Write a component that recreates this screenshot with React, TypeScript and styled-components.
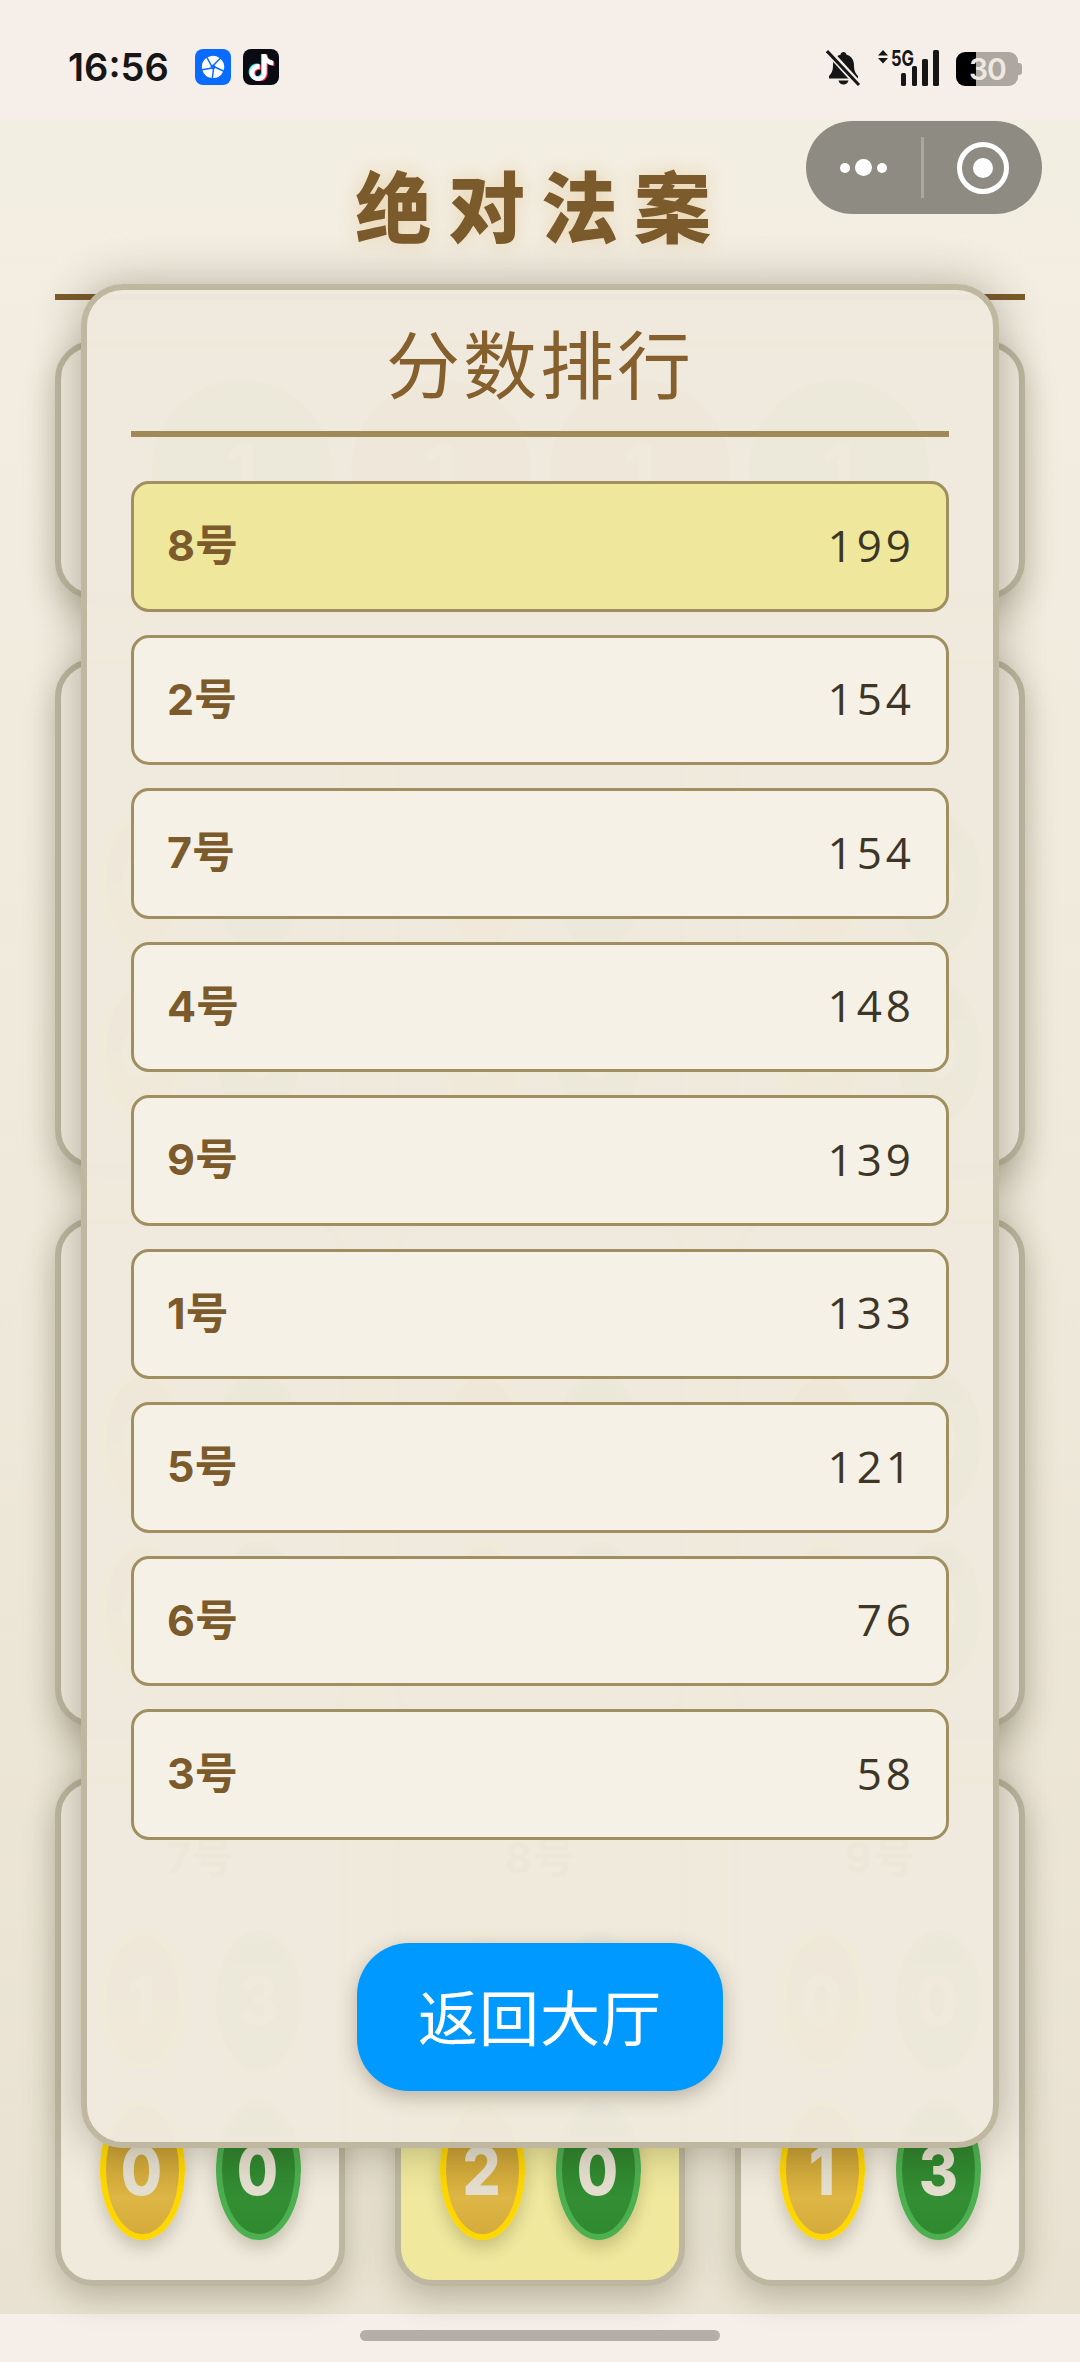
import { createGlobalStyle, styled } from "styled-components";

const CJK = `"Noto Sans CJK SC", sans-serif`;

const GlobalStyle = createGlobalStyle`
  html, body {
    margin: 0;
    padding: 0;
    background: #f6efe9;
  }
  * {
    box-sizing: border-box;
  }
`;

const Screen = styled.div`
  position: relative;
  width: 1080px;
  height: 2362px;
  display: flex;
  flex-direction: column;
  overflow: hidden;
  font-family: Inter, ${CJK};
  background: #f6efe9;
`;

/* status bar */
const StatusBar = styled.div`
  height: 120px;
  flex: none;
  display: flex;
  align-items: flex-start;
  justify-content: space-between;
  padding: 49px 58px 0 68px;
`;

const StatusGroup = styled.div`
  display: flex;
  align-items: center;
`;

const Clock = styled.span`
  font: 600 38px/36px Inter, sans-serif;
  color: #161616;
  width: 127px;
`;

const AppIcon = styled.div<{ $bg: string }>`
  width: 36px;
  height: 36px;
  border-radius: 8px;
  margin-right: 12px;
  background: ${(p) => p.$bg};
  display: flex;
  align-items: center;
  justify-content: center;
`;

const Battery = styled.div`
  position: relative;
  width: 66px;
  height: 34px;
  margin-left: 17px;
  margin-top: 2px;
  display: flex;
  align-items: center;
`;

const BatteryBody = styled.div`
  width: 62px;
  height: 34px;
  border-radius: 9px;
  background: linear-gradient(90deg, #000 32%, #aca7a0 32%);
`;

const BatteryNub = styled.div`
  width: 4px;
  height: 12px;
  border-radius: 0 3px 3px 0;
  background: #aca7a0;
`;

const BatteryLevel = styled.span`
  position: absolute;
  left: 13px;
  top: 0;
  width: 36px;
  text-align: center;
  font: 600 30px/34px Inter, sans-serif;
  letter-spacing: -1px;
  color: #efe8e0;
`;

/* mini program capsule */
const Capsule = styled.div`
  position: absolute;
  top: 121px;
  left: 806px;
  width: 236px;
  height: 93px;
  border-radius: 47px;
  background: #8e8b82;
  display: flex;
  align-items: center;
  z-index: 2;
`;

const CapsuleSide = styled.div<{ $width: number }>`
  flex: 0 0 ${(p) => p.$width}px;
  display: flex;
  align-items: center;
  justify-content: center;
  gap: 5px;
`;

const CapsuleDivider = styled.div`
  width: 3px;
  height: 61px;
  background: #aaa79e;
`;

const Dot = styled.div<{ $size: number }>`
  width: ${(p) => p.$size}px;
  height: ${(p) => p.$size}px;
  border-radius: 50%;
  background: #fff;
`;

const TargetRing = styled.div`
  width: 52px;
  height: 52px;
  border-radius: 50%;
  border: 5px solid #fff;
  display: flex;
  align-items: center;
  justify-content: center;
`;

const TargetCore = styled.div`
  width: 20px;
  height: 20px;
  border-radius: 50%;
  background: #fff;
`;

/* page behind the modal */
const Page = styled.main`
  flex: 1;
  padding: 0 55px;
  background: linear-gradient(180deg, #f3eee2 0%, #efe9db 50%, #e9e2d2 100%);
`;

const PageTitle = styled.h1`
  margin: 0;
  height: 180px;
  padding-top: 36px;
  padding-left: 2px;
  text-align: center;
  font: 900 77px/96px ${CJK};
  letter-spacing: 16px;
  color: #7b5a2b;
  text-shadow: 0 0 18px rgba(214, 170, 90, 0.35);
  border-bottom: 6px solid #7b5a2b;
`;

const Board = styled.div`
  display: flex;
  flex-direction: column;
  gap: 50px;
  margin-top: 41px;
`;

const Panel = styled.section<{ $on?: boolean }>`
  border: 6px solid #bdb6a0;
  border-radius: 38px;
  background: ${(p) => (p.$on ? "#efe89d" : "#f0eadd")};
  box-shadow: 0 12px 32px rgba(70, 60, 30, 0.28);
`;

const TopPanel = styled(Panel)`
  height: 258px;
  margin-bottom: 10px;
  display: flex;
  align-items: center;
  justify-content: center;
  gap: 19px;
`;

const Round = styled.div<{ $tone: string }>`
  width: 180px;
  height: 180px;
  border-radius: 50%;
  background: ${(p) => p.$tone};
  display: flex;
  align-items: center;
  justify-content: center;
  font: 800 70px/1 Inter, sans-serif;
  color: #e5dfd0;
`;

const SeatRow = styled.div`
  display: grid;
  grid-template-columns: repeat(3, 290px);
  justify-content: space-between;
`;

const SeatCard = styled(Panel)`
  height: 509px;
  display: flex;
  flex-direction: column;
  align-items: center;
`;

const SeatName = styled.div`
  height: 125px;
  width: 200px;
  padding-top: 44px;
  text-align: center;
  font: 700 43px/60px Inter, ${CJK};
  color: #7b5a2b;
  border-bottom: 2px solid #d9d0b8;
`;

const Chips = styled.div`
  display: grid;
  grid-template-columns: 85px 85px;
  gap: 30px 31px;
  margin-top: 22px;
`;

const Chip = styled.div<{ $kind: "gold" | "green" }>`
  width: 85px;
  height: 140px;
  border-radius: 50%;
  border: 6px solid ${(p) => (p.$kind === "gold" ? "#ffd700" : "#4caf50")};
  background: ${(p) =>
    p.$kind === "gold"
      ? "linear-gradient(180deg, #b98f25 0%, #deb645 72%, #d4ab3c 100%)"
      : "linear-gradient(180deg, #267a26 0%, #348f34 72%, #2f8a2f 100%)"};
  box-shadow: 0 8px 16px rgba(60, 50, 20, 0.22);
  display: flex;
  align-items: center;
  justify-content: center;
  font: 800 68px/1 Inter, sans-serif;
  color: #e5dfd0;
`;

const ChipDigit = styled.span`
  display: inline-block;
  transform: scaleX(0.88);
`;

/* ranking modal */
const Modal = styled.div`
  position: absolute;
  top: 284px;
  left: 81px;
  width: 918px;
  height: 1864px;
  padding: 0 44px;
  border: 6px solid #bfb7a0;
  border-radius: 42px;
  background: rgba(240, 234, 221, 0.98);
  box-shadow: 0 0 46px rgba(50, 42, 20, 0.32);
  display: flex;
  flex-direction: column;
  align-items: center;
  z-index: 1;
`;

const ModalTitle = styled.h2`
  margin: 0;
  width: 100%;
  height: 147px;
  padding-top: 10px;
  text-align: center;
  font: 400 74px/121px ${CJK};
  letter-spacing: 3px;
  color: #85602c;
  border-bottom: 6px solid #a08a58;
`;

const RankList = styled.ul`
  list-style: none;
  margin: 44px 0 0;
  padding: 0;
  width: 100%;
  display: flex;
  flex-direction: column;
  gap: 23px;
`;

const RankRow = styled.li<{ $top?: boolean }>`
  height: 130.5px;
  padding: 0 34px 0 33px;
  border: 3px solid #a08f60;
  border-radius: 18px;
  background: ${(p) => (p.$top ? "#efe89c" : "#f5f1e6")};
  display: flex;
  align-items: center;
  justify-content: space-between;
`;

const RankName = styled.span`
  font: 700 43px/60px Inter, ${CJK};
  color: #7b5a2b;
  margin-bottom: 2px;
`;

const RankScore = styled.span`
  font: 400 44px/60px "Open Sans", sans-serif;
  letter-spacing: 4px;
  margin: 0 -3px 3px 0;
  color: #3d3626;
`;

const BackButton = styled.button`
  width: 366px;
  height: 148px;
  margin-top: 103px;
  padding: 0 0 4px;
  border: none;
  border-radius: 52px;
  background: #0099ff;
  box-shadow: 0 6px 20px rgba(60, 50, 30, 0.3);
  font: 400 60px/1 ${CJK};
  letter-spacing: 1px;
  color: #fff;
`;

/* home indicator */
const HomeBar = styled.div`
  height: 48px;
  flex: none;
  display: flex;
  justify-content: center;
  padding-top: 16px;
`;

const HomeHandle = styled.div`
  width: 360px;
  height: 11px;
  border-radius: 6px;
  background: #b5aea6;
`;

const SignalIcon = styled.svg`
  margin-left: 16px;
  overflow: visible;
`;

const TIKTOK =
  "M12.525.02c1.31-.02 2.61-.01 3.91-.02.08 1.53.63 3.09 1.75 4.17 1.12 1.11 2.7 1.62 4.24 1.79v4.03c-1.44-.05-2.89-.35-4.2-.97-.57-.26-1.1-.59-1.62-.93-.01 2.92.01 5.84-.02 8.75-.08 1.4-.54 2.79-1.35 3.94-1.31 1.92-3.58 3.17-5.91 3.21-1.43.08-2.86-.31-4.08-1.03-2.02-1.19-3.44-3.37-3.65-5.71-.02-.5-.03-1-.01-1.49.18-1.9 1.12-3.72 2.58-4.96 1.66-1.44 3.98-2.13 6.15-1.72.02 1.48-.04 2.96-.04 4.44-.99-.32-2.15-.23-3.02.37-.63.41-1.11 1.04-1.36 1.75-.21.51-.15 1.07-.14 1.61.24 1.64 1.82 3.02 3.5 2.87 1.12-.01 2.19-.66 2.77-1.61.19-.33.4-.67.41-1.06.1-1.79.06-3.57.07-5.36.01-4.03-.01-8.05.02-12.07z";

const TiktokGlyph = () => (
  <svg width="27" height="27" viewBox="0 0 24 24">
    <path d={TIKTOK} fill="#25f4ee" transform="translate(-1 -0.6)" />
    <path d={TIKTOK} fill="#fe2c55" transform="translate(1 0.7)" />
    <path d={TIKTOK} fill="#fff" />
  </svg>
);

const PinwheelGlyph = () => (
  <svg width="24" height="24" viewBox="-13 -13 26 26">
    {[0, 72, 144, 216, 288].map((deg) => (
      <path
        key={deg}
        d="M-1.200 -2.200 L-5.800 -10.500 A12 12 0 0 1 7 -9.800 L.5 -2.900 Z"
        fill="#fff"
        transform={`rotate(${deg})`}
      />
    ))}
  </svg>
);

const BellOff = () => (
  <svg width="35" height="36" viewBox="0 0 35 36">
    <path
      d="M17.5 2c1.6 0 2.7 1 2.8 2.5C25.5 6 28 10 28 15c0 6 1.500 8.500 4 11v2.500H3V26c2.500-2.500 4-5 4-11 0-5 2.500-9 7.700-10.500C14.800 3 15.900 2 17.500 2z"
      fill="#161616"
    />
    <path d="M12.500 30.500h10c-.6 2.600-2.500 4-5 4s-4.400-1.400-5-4z" fill="#161616" />
    <path d="M2 1L33 35" stroke="#f6efe9" strokeWidth="7" />
    <path d="M1 1L33 35" stroke="#161616" strokeWidth="3" />
  </svg>
);

const Signal = () => (
  <SignalIcon width="62" height="38" viewBox="0 0 62 38">
    <path d="M1 6.500L6 1l5 5.500zM1 9l5 5.500L11 9z" fill="#161616" />
    <text
      x="14"
      y="17"
      fontFamily="Inter, sans-serif"
      fontWeight="700"
      fontSize="22"
      textLength="23"
      lengthAdjust="spacingAndGlyphs"
      fill="#161616"
    >
      5G
    </text>
    <rect x="24" y="24" width="5" height="13" rx="1.500" fill="#161616" />
    <rect x="35" y="17" width="5" height="20" rx="1.500" fill="#161616" />
    <rect x="45" y="10" width="6" height="27" rx="1.500" fill="#161616" />
    <rect x="56" y="1" width="6" height="36" rx="1.500" fill="#161616" />
  </SignalIcon>
);

const seatRows = [
  [
    { name: "1号", chips: ["0", "0", "0", "0"] },
    { name: "2号", chips: ["0", "0", "0", "0"] },
    { name: "3号", chips: ["0", "0", "0", "0"] },
  ],
  [
    { name: "4号", chips: ["0", "0", "0", "0"] },
    { name: "5号", chips: ["0", "0", "0", "0"] },
    { name: "6号", chips: ["0", "0", "0", "0"] },
  ],
  [
    { name: "7号", chips: ["1", "3", "0", "0"] },
    { name: "8号", chips: ["0", "0", "2", "0"], on: true },
    { name: "9号", chips: ["0", "0", "1", "3"] },
  ],
];

const ranking = [
  { name: "8号", score: 199, top: true },
  { name: "2号", score: 154 },
  { name: "7号", score: 154 },
  { name: "4号", score: 148 },
  { name: "9号", score: 139 },
  { name: "1号", score: 133 },
  { name: "5号", score: 121 },
  { name: "6号", score: 76 },
  { name: "3号", score: 58 },
];

const App = () => {
  return (
    <Screen>
      <GlobalStyle />
      <StatusBar>
        <StatusGroup>
          <Clock>16:56</Clock>
          <AppIcon $bg="#0a6cff">
            <PinwheelGlyph />
          </AppIcon>
          <AppIcon $bg="#0b0b14">
            <TiktokGlyph />
          </AppIcon>
        </StatusGroup>
        <StatusGroup>
          <BellOff />
          <Signal />
          <Battery>
            <BatteryBody />
            <BatteryNub />
            <BatteryLevel>30</BatteryLevel>
          </Battery>
        </StatusGroup>
      </StatusBar>

      <Capsule>
        <CapsuleSide $width={115}>
          <Dot $size={10} />
          <Dot $size={17} />
          <Dot $size={10} />
        </CapsuleSide>
        <CapsuleDivider />
        <CapsuleSide $width={118}>
          <TargetRing>
            <TargetCore />
          </TargetRing>
        </CapsuleSide>
      </Capsule>

      <Page>
        <PageTitle>绝对法案</PageTitle>
        <Board>
          <TopPanel>
            <Round $tone="#2e8b2e">1</Round>
            <Round $tone="#c9a02e">1</Round>
            <Round $tone="#c9a02e">1</Round>
            <Round $tone="#2e8b2e">1</Round>
          </TopPanel>
          {seatRows.map((row) => (
            <SeatRow key={row[0].name}>
              {row.map((seat) => (
                <SeatCard key={seat.name} $on={seat.on}>
                  <SeatName>{seat.name}</SeatName>
                  <Chips>
                    {seat.chips.map((value, i) => (
                      <Chip key={i} $kind={i % 2 === 0 ? "gold" : "green"}>
                        <ChipDigit>{value}</ChipDigit>
                      </Chip>
                    ))}
                  </Chips>
                </SeatCard>
              ))}
            </SeatRow>
          ))}
        </Board>
      </Page>

      <HomeBar>
        <HomeHandle />
      </HomeBar>

      <Modal>
        <ModalTitle>分数排行</ModalTitle>
        <RankList>
          {ranking.map((item) => (
            <RankRow key={item.name} $top={item.top}>
              <RankName>{item.name}</RankName>
              <RankScore>{item.score}</RankScore>
            </RankRow>
          ))}
        </RankList>
        <BackButton>返回大厅</BackButton>
      </Modal>
    </Screen>
  );
};

export default App;
